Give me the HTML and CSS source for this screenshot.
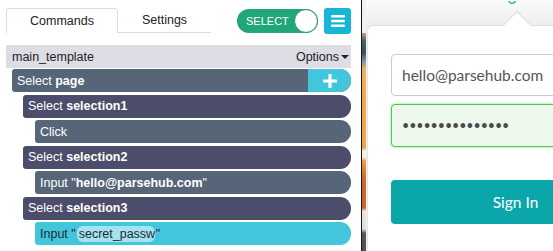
FILE: index.html
```html
<!DOCTYPE html>
<html lang="en">
<head>
    <meta charset="UTF-8">
    <meta name="viewport" content="width=device-width, initial-scale=1.0">
    <title>ParseHub - Commands</title>
    <link rel="stylesheet" href="styles.css">
</head>
<body>
    <div class="app">
        <aside class="editor">
            <div class="toolbar">
                <div class="tabs">
                    <div class="tab active">Commands</div>
                    <div class="tab">Settings</div>
                </div>
                <div class="toggle">
                    <span>SELECT</span>
                    <span class="knob"></span>
                </div>
                <button class="menu-btn">
                    <svg width="14" height="12" viewBox="0 0 14 12">
                        <rect x="0" y="0" width="14" height="2.4" rx="1" fill="#fff"/>
                        <rect x="0" y="4.8" width="14" height="2.4" rx="1" fill="#fff"/>
                        <rect x="0" y="9.6" width="14" height="2.4" rx="1" fill="#fff"/>
                    </svg>
                </button>
            </div>

            <div class="template-bar">
                <span>main_template</span>
                <span class="options">Options<span class="caret"></span></span>
            </div>

            <div class="commands">
                <div class="cmd lvl0 slate">
                    <span>Select <b>page</b></span>
                    <span class="add-btn">
                        <svg width="14" height="14" viewBox="0 0 14 14">
                            <path d="M7 1v12M1 7h12" stroke="#fff" stroke-width="3.2" stroke-linecap="round"/>
                        </svg>
                    </span>
                </div>
                <div class="cmd lvl1 dusk"><span>Select <b>selection1</b></span></div>
                <div class="cmd lvl2 slate"><span>Click</span></div>
                <div class="cmd lvl1 dusk"><span>Select <b>selection2</b></span></div>
                <div class="cmd lvl2 slate"><span>Input "<b>hello@parsehub.com</b>"</span></div>
                <div class="cmd lvl1 dusk"><span>Select <b>selection3</b></span></div>
                <div class="cmd lvl2 active-cmd">
                    <span>Input "</span><span class="value-pill">secret_password</span><span>"</span>
                </div>
            </div>
        </aside>

        <section class="login">
            <div class="photo"></div>
            <div class="pane">
                <div class="pane-head">
                    <svg width="10" height="4" viewBox="0 0 10 4">
                        <circle cx="5" cy="-1" r="3.4" fill="none" stroke="#21aab4" stroke-width="1.3"/>
                    </svg>
                </div>
                <div class="card">
                    <span class="notch"></span>
                    <div class="field">hello@parsehub.com</div>
                    <div class="field focused">•••••••••••••••</div>
                    <div class="signin">Sign In</div>
                </div>
            </div>
        </section>
    </div>
</body>
</html>
```

FILE: styles.css
```css
:root {
    --slate: #566678;
    --dusk: #4c4d6b;
    --cyan: #43c6dc;
    --teal: #0aa6aa;
    --green: #20a679;
    --border: #dddddd;
}

* {
    margin: 0;
    padding: 0;
    box-sizing: border-box;
}

body {
    font-family: 'Liberation Sans', Arial, sans-serif;
    background: #ffffff;
    color: #222;
    width: 553px;
    height: 251px;
    overflow: hidden;
}

.app {
    display: flex;
    height: 251px;
}

/* Left: command editor */
.editor {
    width: 362px;
    flex-shrink: 0;
    border-right: 1px solid #151515;
    padding: 8px 10px 0 6px;
    background: #fff;
}

.toolbar {
    display: flex;
    align-items: flex-start;
    height: 26px;
}

.tabs {
    display: flex;
    height: 25px;
}

.tab {
    padding: 0 24px;
    font-size: 12.5px;
    line-height: 24px;
    color: #222;
    border-bottom: 1px solid var(--border);
}

.tab.active {
    border: 1px solid var(--border);
    border-bottom: none;
    border-radius: 4px 4px 0 0;
    padding: 0 23px;
    line-height: 24px;
}

.toggle {
    margin-left: auto;
    margin-top: 1px;
    width: 81px;
    height: 24px;
    border-radius: 12px;
    background: var(--green);
    display: flex;
    align-items: center;
    justify-content: space-between;
    padding-left: 9px;
    color: #fff;
    font-size: 11px;
}

.knob {
    width: 24px;
    height: 24px;
    border-radius: 50%;
    background: #fff;
    border: 1.5px solid #1d9a70;
    box-shadow: inset 0 0 1px rgba(0, 0, 0, 0.2);
}

.menu-btn {
    margin-left: 6px;
    width: 27px;
    height: 26px;
    border: none;
    border-radius: 3px;
    background: #17b5d6;
    display: flex;
    align-items: center;
    justify-content: center;
}

.template-bar {
    margin-top: 11px;
    height: 23px;
    background: #dedde6;
    display: flex;
    align-items: center;
    justify-content: space-between;
    padding: 0 2px 0 6px;
    font-size: 12.5px;
    color: #222;
}

.options {
    display: flex;
    align-items: center;
}

.caret {
    margin-left: 2px;
    width: 0;
    height: 0;
    border-left: 4px solid transparent;
    border-right: 4px solid transparent;
    border-top: 4px solid #222;
}

.commands {
    margin-top: 1px;
    display: flex;
    flex-direction: column;
    gap: 2.5px;
}

.cmd {
    height: 23px;
    display: flex;
    align-items: center;
    padding-left: 5px;
    border-radius: 3px 11px 11px 3px;
    font-size: 12.5px;
    color: #fff;
    white-space: nowrap;
    overflow: hidden;
}

.lvl0 { margin-left: 6px; }
.lvl1 { margin-left: 17px; }
.lvl2 { margin-left: 29px; }

.slate { background: var(--slate); }
.dusk { background: var(--dusk); }

.active-cmd {
    background: var(--cyan);
    color: #1b2a38;
}

.add-btn {
    margin-left: auto;
    width: 43px;
    height: 23px;
    background: var(--cyan);
    border-radius: 0 11px 11px 0;
    display: flex;
    align-items: center;
    justify-content: center;
}

.value-pill {
    display: inline-block;
    width: 78px;
    overflow: hidden;
    background: #a7e3ee;
    border-radius: 6px;
    padding: 1px 2px 1px 2px;
    margin-left: 1px;
    margin-right: 1px;
    line-height: 14px;
}

/* Right: sign in page */
.login {
    flex: 1;
    display: flex;
    background: #f1f1f1;
    overflow: hidden;
}

.photo {
    width: 4px;
    flex-shrink: 0;
    margin-top: 33px;
    background: linear-gradient(to bottom,
        #b9a88e 0px, #4a605a 8px, #3c5552 20px, #7a97a6 28px,
        #e9b366 36px, #f2a948 60px, #f0a544 115px,
        #f4f0ea 118px, #f2efe9 124px, #e9a040 128px,
        #c9692e 146px, #c46a32 175px, #e6e4e2 178px, #dedede 196px,
        #5a5a5a 200px, #4e4e4e 218px);
}

.pane {
    flex: 1;
    display: flex;
    flex-direction: column;
    background: linear-gradient(to bottom, #fbfbfb, #eeeeee 25px);
}

.pane-head {
    height: 25px;
    padding-left: 141px;
    line-height: 0;
}

.card {
    flex: 1;
    width: 290px;
    margin-left: 1px;
    background: #fff;
    border-top: 1px solid #dcdcdc;
    border-left: 1px solid #e6e6e6;
    border-top-left-radius: 6px;
    padding: 28px 0 0 23px;
    position: relative;
    font-family: Lato, 'Liberation Sans', sans-serif;
}

.notch {
    position: absolute;
    top: -11px;
    left: 139px;
    width: 20px;
    height: 20px;
    background: #fff;
    border-top: 1px solid #dcdcdc;
    border-left: 1px solid #dcdcdc;
    transform: rotate(45deg);
}

.field {
    width: 249px;
    height: 42px;
    border: 1px solid #cccccc;
    border-radius: 4px;
    padding-left: 10px;
    display: flex;
    align-items: center;
    font-size: 15.5px;
    color: #555;
}

.field.focused {
    margin-top: 8px;
    height: 43px;
    border: 1.5px solid #4fc64f;
    background: #eef9ee;
    box-shadow: 0 0 3px rgba(70, 200, 70, 0.6);
    font-size: 12.5px;
    letter-spacing: -0.1px;
    color: #4a4a4a;
}

.signin {
    margin-top: 33px;
    width: 249px;
    height: 44px;
    border-radius: 4px;
    background: var(--teal);
    color: #fff;
    font-size: 15.5px;
    display: flex;
    align-items: center;
    justify-content: center;
}
```
